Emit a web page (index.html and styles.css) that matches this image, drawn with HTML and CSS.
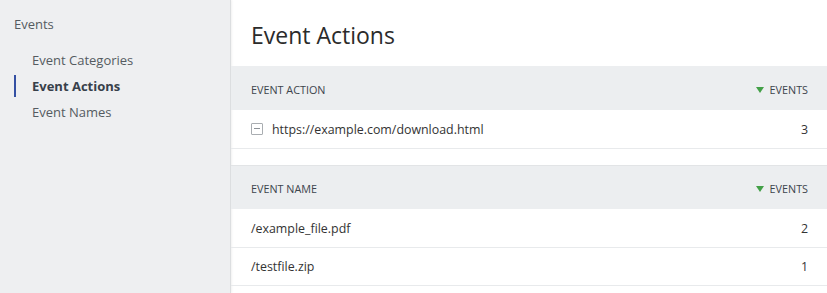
FILE: index.html
```html
<!DOCTYPE html>
<html lang="en">
  <head>
    <meta charset="UTF-8" />
    <title>Event Actions</title>
    <link rel="stylesheet" href="styles.css">
  </head>
  <body>
    <div class="layout">
      <aside class="sidebar">
        <div class="sidebar-title">Events</div>
        <nav class="sidebar-nav">
          <a class="nav-item">Event Categories</a>
          <a class="nav-item active">Event Actions</a>
          <a class="nav-item">Event Names</a>
        </nav>
      </aside>

      <main class="content">
        <h1>Event Actions</h1>

        <table class="report">
          <thead>
            <tr>
              <th>Event Action</th>
              <th class="num"><span class="sort-arrow"></span>Events</th>
            </tr>
          </thead>
          <tbody>
            <tr>
              <td><span class="expand-icon"></span>https://example.com/download.html</td>
              <td class="num">3</td>
            </tr>
          </tbody>
        </table>

        <table class="report subtable">
          <thead>
            <tr>
              <th>Event Name</th>
              <th class="num"><span class="sort-arrow"></span>Events</th>
            </tr>
          </thead>
          <tbody>
            <tr>
              <td>/example_file.pdf</td>
              <td class="num">2</td>
            </tr>
            <tr>
              <td>/testfile.zip</td>
              <td class="num">1</td>
            </tr>
          </tbody>
        </table>
      </main>
    </div>
  </body>
</html>
```

FILE: styles.css
```css
:root {
  --text-color: #333333;
  --muted-color: #555b61;
  --sidebar-bg: #eeeff1;
  --header-bg: #eceef0;
  --border-color: #e8eaec;
  --accent-color: #3450a3;
  --sort-color: #43a047;
}

* {
  margin: 0;
  padding: 0;
  box-sizing: border-box;
  font-family: 'Open Sans', 'Noto Sans', sans-serif;
}

body {
  background-color: white;
  color: var(--text-color);
  width: 827px;
  height: 293px;
  overflow: hidden;
}

.layout {
  display: flex;
  height: 100%;
}

.sidebar {
  width: 231px;
  flex-shrink: 0;
  background-color: var(--sidebar-bg);
  border-right: 1px solid #dcdee0;
  box-shadow: 1px 0 2px rgba(0, 0, 0, 0.06);
  padding-top: 15px;
}

.sidebar-title {
  font-size: 13px;
  color: var(--muted-color);
  padding-left: 14px;
  line-height: 18px;
}

.sidebar-nav {
  display: flex;
  flex-direction: column;
  margin-top: 14px;
}

.nav-item {
  display: block;
  font-size: 13px;
  line-height: 26px;
  color: var(--muted-color);
  padding-left: 32px;
  position: relative;
}

.nav-item.active {
  font-weight: 700;
  color: #37404a;
}

.nav-item.active::before {
  content: '';
  position: absolute;
  left: 14px;
  top: 2px;
  bottom: 2px;
  width: 2px;
  background-color: var(--accent-color);
}

.content {
  flex: 1;
}

h1 {
  font-size: 23px;
  font-weight: 400;
  color: #2b2b2b;
  padding: 19px 0 0 20px;
  height: 66px;
}

.report {
  width: 100%;
  border-collapse: collapse;
}

.report th {
  background-color: var(--header-bg);
  font-size: 10.8px;
  font-weight: 400;
  text-transform: uppercase;
  color: #3d454d;
  text-align: left;
  height: 44px;
  padding: 2px 19px 0 20px;
}

.report td {
  font-size: 12.4px;
  color: var(--text-color);
  height: 38px;
  padding: 1px 19px 0 20px;
  border-bottom: 1px solid var(--border-color);
}

.report .num {
  text-align: right;
}

.subtable {
  margin-top: 16px;
}

.subtable thead tr {
  border-top: 1px solid #e2e4e6;
}

.sort-arrow {
  display: inline-block;
  width: 0;
  height: 0;
  border-left: 4px solid transparent;
  border-right: 4px solid transparent;
  border-top: 6px solid var(--sort-color);
  margin-right: 6px;
  vertical-align: 1px;
}

.expand-icon {
  display: inline-block;
  width: 12px;
  height: 12px;
  border: 1px solid #a9adb1;
  border-radius: 1px;
  margin-right: 9px;
  vertical-align: -1px;
  position: relative;
}

.expand-icon::after {
  content: '';
  position: absolute;
  left: 2px;
  right: 2px;
  top: 4px;
  height: 1px;
  background-color: #8d9298;
}
```
